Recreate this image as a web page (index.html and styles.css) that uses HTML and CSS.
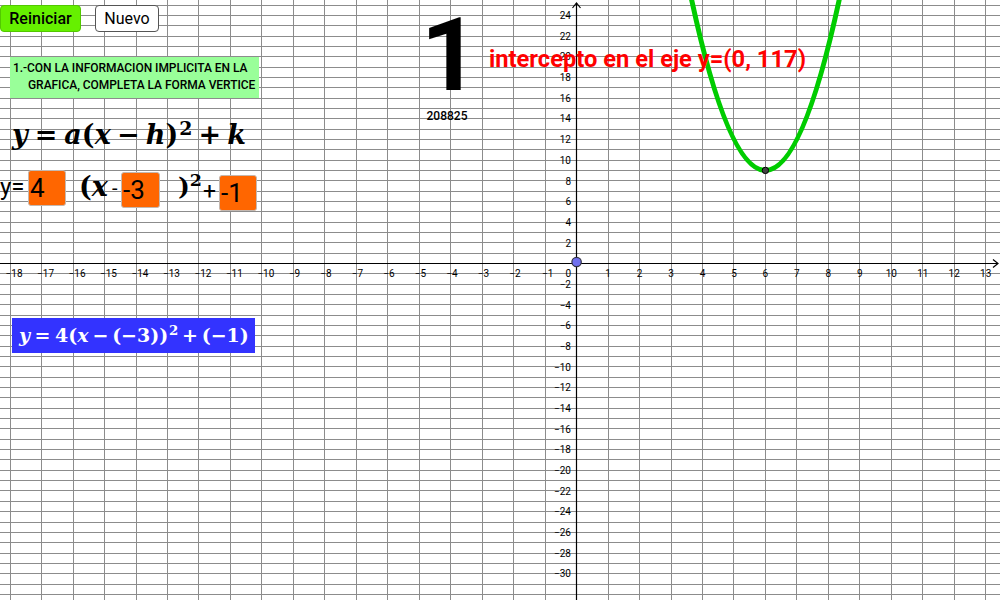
FILE: index.html
```html
<!DOCTYPE html>
<html lang="es">
<head>
<meta charset="utf-8">
<title>Forma vértice</title>
<link rel="stylesheet" href="styles.css">
</head>
<body>
<div class="canvas">
  <svg class="plot" width="1000" height="600" viewBox="0 0 1000 600">
    <path class="grid" d="M10.5 0V600M41.5 0V600M73.5 0V600M104.5 0V600M136.5 0V600M167.5 0V600M198.5 0V600M230.5 0V600M261.5 0V600M293.5 0V600M324.5 0V600M356.5 0V600M387.5 0V600M419.5 0V600M450.5 0V600M482.5 0V600M513.5 0V600M545.5 0V600M608.5 0V600M639.5 0V600M671.5 0V600M702.5 0V600M733.5 0V600M765.5 0V600M796.5 0V600M828.5 0V600M859.5 0V600M891.5 0V600M922.5 0V600M954.5 0V600M985.5 0V600
    M0 5.5H1000M0 15.5H1000M0 25.5H1000M0 36.5H1000M0 46.5H1000M0 56.5H1000M0 67.5H1000M0 77.5H1000M0 87.5H1000M0 98.5H1000M0 108.5H1000M0 118.5H1000M0 129.5H1000M0 139.5H1000M0 149.5H1000M0 160.5H1000M0 170.5H1000M0 180.5H1000M0 191.5H1000M0 201.5H1000M0 211.5H1000M0 222.5H1000M0 232.5H1000M0 242.5H1000M0 253.5H1000M0 273.5H1000M0 284.5H1000M0 294.5H1000M0 304.5H1000M0 315.5H1000M0 325.5H1000M0 335.5H1000M0 346.5H1000M0 356.5H1000M0 366.5H1000M0 377.5H1000M0 387.5H1000M0 397.5H1000M0 408.5H1000M0 418.5H1000M0 428.5H1000M0 439.5H1000M0 449.5H1000M0 459.5H1000M0 470.5H1000M0 480.5H1000M0 490.5H1000M0 501.5H1000M0 511.5H1000M0 522.5H1000M0 532.5H1000M0 542.5H1000M0 553.5H1000M0 563.5H1000M0 573.5H1000M0 584.5H1000M0 594.5H1000"/>
    <path class="axis" d="M0 263.5H998M576.5 600V3"/>
    <path class="axis" d="M993 259.5L998 263.5L993 267.5M572.5 8L576.5 3L580.5 8"/>
    <g class="xlabels">
      <text class="neg" x="5.6" y="276.5">−18</text>
      <text class="neg" x="37.1" y="276.5">−17</text>
      <text class="neg" x="68.6" y="276.5">−16</text>
      <text class="neg" x="100" y="276.5">−15</text>
      <text class="neg" x="131.5" y="276.5">−14</text>
      <text class="neg" x="163" y="276.5">−13</text>
      <text class="neg" x="194.5" y="276.5">−12</text>
      <text class="neg" x="225.9" y="276.5">−11</text>
      <text class="neg" x="257.4" y="276.5">−10</text>
      <text class="neg" x="288.9" y="276.5">−9</text>
      <text class="neg" x="320.3" y="276.5">−8</text>
      <text class="neg" x="351.8" y="276.5">−7</text>
      <text class="neg" x="383.3" y="276.5">−6</text>
      <text class="neg" x="414.8" y="276.5">−5</text>
      <text class="neg" x="446.2" y="276.5">−4</text>
      <text class="neg" x="477.7" y="276.5">−3</text>
      <text class="neg" x="509.2" y="276.5">−2</text>
      <text class="neg" x="542" y="276.5">−1</text>
      <text class="end" x="571" y="276.5">0</text>
      <text x="608.1" y="276.5">1</text>
      <text x="639.5" y="276.5">2</text>
      <text x="671" y="276.5">3</text>
      <text x="702.5" y="276.5">4</text>
      <text x="734" y="276.5">5</text>
      <text x="765.4" y="276.5">6</text>
      <text x="796.9" y="276.5">7</text>
      <text x="828.4" y="276.5">8</text>
      <text x="859.8" y="276.5">9</text>
      <text x="891.3" y="276.5">10</text>
      <text x="922.8" y="276.5">11</text>
      <text x="954.2" y="276.5">12</text>
      <text x="985.7" y="276.5">13</text>
    </g>
    <g class="ylabels">
      <text x="571" y="19">24</text>
      <text x="571" y="39.7">22</text>
      <text x="571" y="60.4">20</text>
      <text x="571" y="81.1">18</text>
      <text x="571" y="101.8">16</text>
      <text x="571" y="122.4">14</text>
      <text x="571" y="143.1">12</text>
      <text x="571" y="163.8">10</text>
      <text x="571" y="184.5">8</text>
      <text x="571" y="205.2">6</text>
      <text x="571" y="225.8">4</text>
      <text x="571" y="246.5">2</text>
      <text x="571" y="287.9">−2</text>
      <text x="571" y="308.6">−4</text>
      <text x="571" y="329.2">−6</text>
      <text x="571" y="349.9">−8</text>
      <text x="571" y="370.6">−10</text>
      <text x="571" y="391.3">−12</text>
      <text x="571" y="412">−14</text>
      <text x="571" y="432.6">−16</text>
      <text x="571" y="453.3">−18</text>
      <text x="571" y="474">−20</text>
      <text x="571" y="494.7">−22</text>
      <text x="571" y="515.4">−24</text>
      <text x="571" y="536">−26</text>
      <text x="571" y="556.7">−28</text>
      <text x="571" y="577.4">−30</text>
    </g>
    <path class="curve" d="M688.35 -15.7Q765.42 356.56 842.49 -15.7"/>
    <circle class="vertex" cx="765.4" cy="170.4" r="3.2"/>
    <circle class="origin" cx="576.6" cy="262" r="4.7"/>
  </svg>

  <div class="toolbar">
    <button class="btn btn-reset" type="button">Reiniciar</button>
    <button class="btn btn-new" type="button">Nuevo</button>
  </div>

  <div class="prompt">
    <div>1.-CON LA INFORMACION IMPLICITA EN LA</div>
    <div class="indent">GRAFICA, COMPLETA LA FORMA VERTICE</div>
  </div>

  <div class="tex formula-general">
    <i>y</i><span class="rel">=</span><i>a</i>(<i>x</i><span class="bin">−</span><i>h</i>)<sup>2</sup><span class="bin">+</span><i>k</i>
  </div>

  <div class="answer">
    <span class="ans-y">y=</span>
    <span class="inbox b1">4</span>
    <span class="tex ans-open">(<i>x</i></span>
    <span class="ans-minus">-</span>
    <span class="inbox b2">-3</span>
    <span class="tex ans-close">)<sup>2</sup></span>
    <span class="ans-plus">+</span>
    <span class="inbox b3">-1</span>
  </div>

  <div class="result">
    <div class="tex formula-result">
      <i>y</i><span class="rel">=</span>4(<i>x</i><span class="bin">−</span>(−3))<sup>2</sup><span class="bin">+</span>(−1)
    </div>
  </div>

  <div class="counter">
    <div class="big-num">1</div>
    <div class="code">208825</div>
  </div>

  <div class="intercept">intercepto en el eje y=(0, 117)</div>
</div>
</body>
</html>
```

FILE: styles.css
```css
html, body {
  margin: 0;
  padding: 0;
  background: #ffffff;
}

.canvas {
  position: relative;
  width: 1000px;
  height: 600px;
  overflow: hidden;
  font-family: Roboto, "Liberation Sans", sans-serif;
  color: #000;
}

.plot {
  position: absolute;
  left: 0;
  top: 0;
  display: block;
}

.grid {
  fill: none;
  stroke: #8c8c8c;
  stroke-width: 1;
  shape-rendering: crispEdges;
}

.axis {
  fill: none;
  stroke: #000;
  stroke-width: 1.2;
}

.xlabels text,
.ylabels text {
  font-family: Roboto, sans-serif;
  font-size: 10px;
  fill: #000;
}

.xlabels text {
  text-anchor: middle;
}

.xlabels text.neg {
  text-anchor: start;
}

.xlabels text.end,
.ylabels text {
  text-anchor: end;
}

.curve {
  fill: none;
  stroke: #00cc00;
  stroke-width: 5;
}

.vertex {
  fill: #444444;
  stroke: #000;
  stroke-width: 1;
}

.origin {
  fill: #7070ee;
  stroke: #333344;
  stroke-width: 1.2;
}

/* buttons */
.toolbar {
  position: absolute;
  left: 0;
  top: 5px;
  display: flex;
  gap: 14px;
}

.btn {
  height: 27px;
  box-sizing: border-box;
  margin: 0;
  padding: 0;
  font-family: Roboto, sans-serif;
  font-size: 16px;
  color: #000;
  border-radius: 4px;
  cursor: pointer;
}

.btn-reset {
  width: 81px;
  background: #66f000;
  border: 1px solid #52c800;
  font-weight: 500;
}

.btn-new {
  width: 64px;
  background: #ffffff;
  border: 1px solid #555555;
}

/* prompt */
.prompt {
  position: absolute;
  left: 10px;
  top: 57px;
  width: 249px;
  height: 41px;
  box-sizing: border-box;
  padding: 3px 0 0 3px;
  background: #99ff99;
  font-size: 12px;
  font-weight: 500;
  line-height: 16.6px;
  letter-spacing: -0.05px;
  white-space: nowrap;
}

.prompt .indent {
  padding-left: 15px;
}

/* LaTeX-like formulas */
.tex {
  font-family: "DejaVu Serif", "Liberation Serif", serif;
  font-weight: bold;
  white-space: nowrap;
}

.tex i {
  font-style: italic;
}

.tex sup {
  font-size: 0.7em;
  line-height: 0;
  vertical-align: 0.5em;
  margin-left: 0.05em;
}

.tex .rel {
  margin: 0 0.24em;
}

.tex .bin {
  margin: 0 0.2em;
}

.formula-general {
  position: absolute;
  left: 12px;
  top: 122px;
  font-size: 27px;
  line-height: 26px;
}

.formula-general .rel {
  margin: 0 0.26em;
}

.formula-general .bin {
  margin: 0 0.23em;
}

/* answer row */
.answer {
  position: absolute;
  left: 0;
  top: 170px;
  display: flex;
  align-items: flex-start;
}

.ans-y {
  width: 28px;
  margin-top: 5px;
  font-size: 24px;
  line-height: 24px;
}

.inbox {
  width: 38px;
  height: 36px;
  box-sizing: border-box;
  padding-left: 1px;
  background: #ff6600;
  border: 1px solid #c4b8b0;
  border-radius: 3px;
  font-size: 26px;
  line-height: 34px;
}

.b2 {
  width: 39px;
  margin-top: 2px;
}

.b3 {
  margin-left: 1px;
  margin-top: 5px;
}

.ans-open {
  width: 33px;
  margin-left: 13px;
  margin-top: 4px;
  font-size: 27px;
  line-height: 26px;
}

.ans-minus {
  width: 9px;
  margin-top: 8px;
  font-size: 20px;
  line-height: 20px;
}

.ans-close {
  width: 22px;
  margin-left: 18px;
  margin-top: 4px;
  font-size: 25px;
  line-height: 26px;
}

.ans-close sup {
  margin-left: 0;
}

.ans-plus {
  width: 15px;
  margin-left: 3px;
  margin-top: 10px;
  font-size: 23px;
  line-height: 23px;
}

/* result */
.result {
  position: absolute;
  left: 12px;
  top: 318px;
  width: 243px;
  height: 35px;
  box-sizing: border-box;
  padding: 6px 0 0 7px;
  background: #3333ff;
  color: #ffffff;
}

.formula-result {
  font-size: 19px;
  line-height: 22px;
}

/* counter */
.counter {
  position: absolute;
  left: 417px;
  top: 0;
  width: 60px;
  display: flex;
  flex-direction: column;
  align-items: center;
}

.big-num {
  margin-left: 6px;
  font-size: 102px;
  line-height: 110px;
  font-weight: 700;
}

.code {
  font-size: 12px;
  line-height: 12px;
  font-weight: 500;
}

/* intercept label */
.intercept {
  position: absolute;
  left: 489px;
  top: 47px;
  font-size: 23.7px;
  line-height: 24px;
  font-weight: 700;
  color: #ff0000;
  white-space: nowrap;
}
```
